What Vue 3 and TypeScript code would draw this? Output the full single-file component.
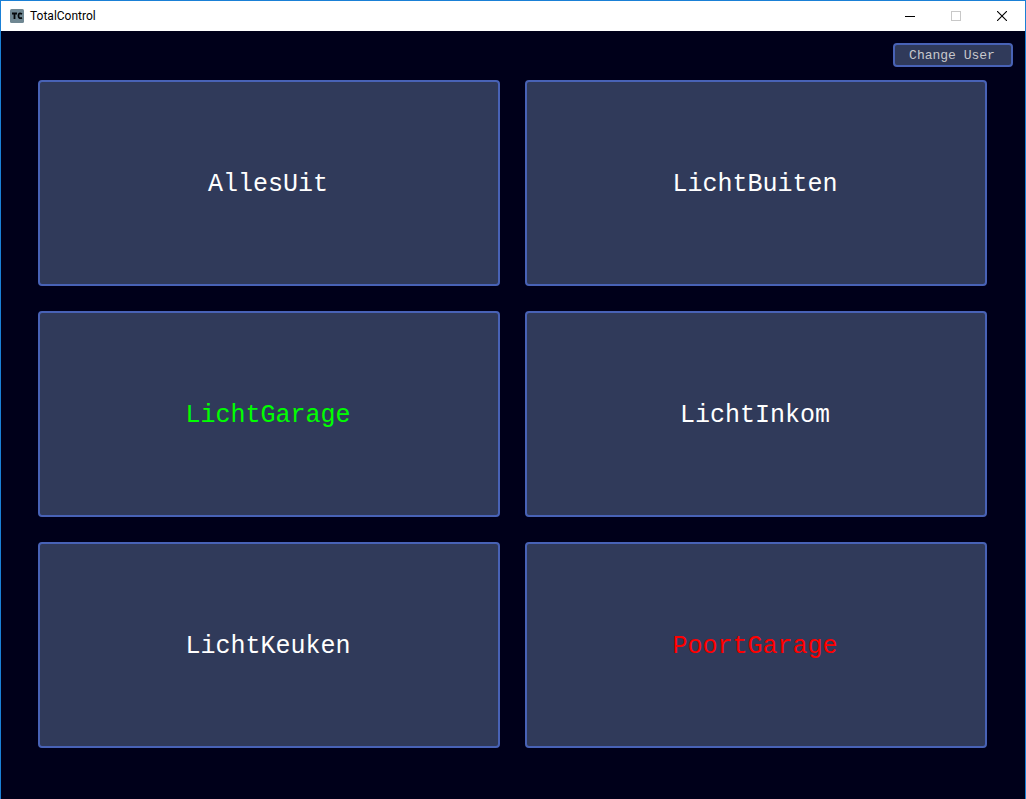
<script setup lang="ts">
type Status = 'idle' | 'on' | 'alert'

interface Action {
  name: string
  status: Status
}

const actions: Action[] = [
  { name: 'AllesUit', status: 'idle' },
  { name: 'LichtBuiten', status: 'idle' },
  { name: 'LichtGarage', status: 'on' },
  { name: 'LichtInkom', status: 'idle' },
  { name: 'LichtKeuken', status: 'idle' },
  { name: 'PoortGarage', status: 'alert' },
]
</script>

<template>
  <div class="window">
    <header class="titlebar">
      <svg class="logo" width="14" height="14" viewBox="0 0 14 14" aria-hidden="true">
        <rect width="14" height="14" rx="1.500" fill="#6f8792" />
        <path d="M2 4.500H7M4.500 4.500V10" stroke="#05090c" stroke-width="1.800" fill="none" />
        <path d="M12 5Q8.500 3.200 8.500 6.800Q8.500 10.200 12 8.800" stroke="#05090c" stroke-width="1.800" fill="none" />
      </svg>
      <h1 class="title">TotalControl</h1>
      <button class="control" type="button" aria-label="Minimize">
        <svg width="10" height="10" viewBox="0 0 10 10" shape-rendering="crispEdges">
          <rect y="5" width="10" height="1" fill="#000" />
        </svg>
      </button>
      <button class="control" type="button" aria-label="Maximize" disabled>
        <svg width="10" height="10" viewBox="0 0 10 10">
          <rect x=".5" y=".5" width="9" height="9" fill="none" stroke="#c8c8c8" />
        </svg>
      </button>
      <button class="control" type="button" aria-label="Close">
        <svg width="10" height="10" viewBox="0 0 10 10">
          <path d="M0 0L10 10M10 0L0 10" fill="none" stroke="#000" stroke-width="1.1" />
        </svg>
      </button>
    </header>

    <div class="toolbar">
      <button class="panel change-user" type="button">Change User</button>
    </div>

    <main class="grid">
      <button
        v-for="action in actions"
        :key="action.name"
        class="panel tile"
        :class="action.status"
        type="button"
      >
        {{ action.name }}
      </button>
    </main>
  </div>
</template>

<style>
body {
  margin: 0;
  background: #00001a;
}
</style>

<style scoped>
.window {
  box-sizing: border-box;
  min-height: 100vh;
  display: flex;
  flex-direction: column;
  border: 1px solid #1a80d6;
  border-bottom: 0;
  background: #00001a;
}

.titlebar {
  display: flex;
  align-items: center;
  height: 30px;
  padding-left: 9px;
  background: #fff;
}

.logo {
  flex: none;
}

.title {
  flex: 1;
  margin: 0 0 0 6px;
  font: 400 12px/16px Roboto, "Open Sans", sans-serif;
  color: #000;
}

.control {
  display: flex;
  align-items: center;
  justify-content: center;
  width: 46px;
  height: 30px;
  padding: 0;
  border: 0;
  background: transparent;
}

.toolbar {
  display: flex;
  justify-content: flex-end;
  padding: 12px 12px 13px;
}

.panel {
  box-sizing: border-box;
  border: 2px solid #4862b6;
  border-radius: 4px;
  background: #303a5a;
  font-family: "Liberation Mono", monospace;
  cursor: pointer;
}

.change-user {
  width: 120px;
  height: 24px;
  padding: 2px 2px 0 0;
  font-size: 13px;
  line-height: 18px;
  color: #c8c8cc;
}

.grid {
  flex: 1;
  display: grid;
  grid-template-columns: repeat(2, minmax(0, 1fr));
  grid-auto-rows: minmax(96px, 1fr);
  gap: 25px;
  padding: 0 38px 51px 37px;
}

.tile {
  padding: 4px 2px 0 0;
  font-size: 25px;
  line-height: 28px;
  color: #fff;
}

.tile.on {
  color: #00ff00;
}

.tile.alert {
  color: #ff0000;
}
</style>
